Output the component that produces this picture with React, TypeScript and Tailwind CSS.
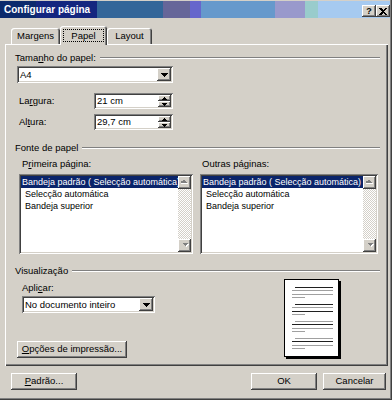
import React from 'react';

const sunken =
  'shadow-[inset_1px_1px_0_#808080,inset_-1px_-1px_0_#ffffff,inset_2px_2px_0_#404040,inset_-2px_-2px_0_#d4d0c8]';
const raised =
  'shadow-[inset_-1px_-1px_0_#404040,inset_1px_1px_0_#ffffff,inset_-2px_-2px_0_#808080,inset_2px_2px_0_#d4d0c8]';
const raisedThin = 'shadow-[inset_-1px_-1px_0_#404040,inset_1px_1px_0_#ffffff,inset_-2px_-2px_0_#808080]';

function GroupTitle({ children, className = '' }: { children: React.ReactNode; className?: string }) {
  return (
    <div className={`flex items-center gap-[4px] h-[12px] leading-[12px] ${className}`}>
      <span className="whitespace-nowrap">{children}</span>
      <div className="flex-1 h-0 border-t border-t-[#808080] border-b border-b-white" />
    </div>
  );
}

function DownArrow({ color = '#000000' }: { color?: string }) {
  return (
    <svg width="7" height="4" viewBox="0 0 7 4" shapeRendering="crispEdges">
      <path d="M0 0h7v1h-1v1h-1v1h-1v1h-1v-1h-1v-1h-1v-1h-1z" fill={color} />
    </svg>
  );
}

function SmallArrow({ up }: { up?: boolean }) {
  return (
    <svg width="5" height="3" viewBox="0 0 5 3" shapeRendering="crispEdges">
      {up ? (
        <path d="M2 0h1v1h1v1h1v1h-5v-1h1v-1h1z" fill="#000" />
      ) : (
        <path d="M0 0h5v1h-1v1h-1v1h-1v-1h-1v-1h-1z" fill="#000" />
      )}
    </svg>
  );
}

function GreyArrow({ up }: { up?: boolean }) {
  const d = up ? 'M3 0h1v1h1v1h1v1h-7v-1h1v-1h1z' : 'M0 0h7v1h-1v1h-1v1h-1v-1h-1v-1h-1v-1z';
  return (
    <svg width="8" height="5" viewBox="0 0 8 5" shapeRendering="crispEdges">
      <path d={d} fill="#ffffff" transform="translate(1 1)" />
      <path d={d} fill="#808080" />
    </svg>
  );
}

function Select({ value, className = '' }: { value: string; className?: string }) {
  return (
    <div className={`${sunken} bg-white h-[17px] p-[2px] flex ${className}`}>
      <span className="flex-1 leading-[13px] pl-[1px] whitespace-nowrap">{value}</span>
      <div className={`${raised} bg-[#d4d0c8] w-[14px] flex items-center justify-center`}>
        <DownArrow />
      </div>
    </div>
  );
}

function SpinBox({ value }: { value: string }) {
  return (
    <div className={`${sunken} bg-white w-[79px] h-[16px] p-[2px] flex`}>
      <span className="flex-1 leading-[12px] pl-[1px]">{value}</span>
      <div className="w-[13px] flex flex-col">
        <div className={`${raisedThin} bg-[#d4d0c8] h-[6px] flex items-center justify-center`}>
          <SmallArrow up />
        </div>
        <div className={`${raisedThin} bg-[#d4d0c8] h-[6px] flex items-center justify-center`}>
          <SmallArrow />
        </div>
      </div>
    </div>
  );
}

function Scrollbar() {
  return (
    <div className="w-[13px] shrink-0 flex flex-col bg-[image:repeating-conic-gradient(#d4d0c8_0_25%,#ffffff_0_50%)] bg-[length:2px_2px]">
      <div className={`${raised} bg-[#d4d0c8] h-[13px] flex items-center justify-center`}>
        <GreyArrow up />
      </div>
      <div className="flex-1" />
      <div className={`${raised} bg-[#d4d0c8] h-[13px] flex items-center justify-center`}>
        <GreyArrow />
      </div>
    </div>
  );
}

const trays = ['Bandeja padrão ( Selecção automática)', 'Selecção automática', 'Bandeja superior'];

function ListBox({ className = '' }: { className?: string }) {
  return (
    <div className={`${sunken} bg-white h-[80px] p-[2px] flex text-[9px] ${className}`}>
      <div className="flex-1 min-w-0 overflow-hidden">
        {trays.map((t, i) => (
          <div
            key={t}
            className={
              i === 0
                ? 'h-[12px] leading-[12px] whitespace-nowrap bg-[#0a246a] text-white pl-[1px]'
                : 'h-[12px] leading-[12px] whitespace-nowrap pl-[4px]'
            }
          >
            {t}
          </div>
        ))}
      </div>
      <Scrollbar />
    </div>
  );
}

function Button({ children, className = '' }: { children: React.ReactNode; className?: string }) {
  return (
    <div className={`${raised} bg-[#d4d0c8] h-[17px] flex items-center justify-center whitespace-nowrap ${className}`}>
      {children}
    </div>
  );
}

function Tab({ label, width, selected }: { label: string; width: string; selected?: boolean }) {
  return (
    <div
      className={`${width} ${
        selected ? 'h-[19px] -mb-px relative z-10 pt-[3px]' : 'h-[16px] pt-[2px]'
      } bg-[#d4d0c8] rounded-t-[3px] shadow-[inset_1px_1px_0_#ffffff,inset_-1px_0_0_#404040,inset_-2px_0_0_#808080] flex justify-center`}
    >
      {selected ? (
        <span className="w-[41px] h-[13px] leading-[11px] text-center border border-dotted border-black">{label}</span>
      ) : (
        <span className="leading-[12px]">{label}</span>
      )}
    </div>
  );
}

function PagePreview() {
  const groups = [
    ['#202020', '#a0a0a0', '#a0a0a0', '#a0a0a0'],
    ['#202020', '#a0a0a0', '#202020', '#a0a0a0'],
    ['#a0a0a0', '#202020', '#a0a0a0', '#a0a0a0'],
    ['#a0a0a0', '#202020', '#a0a0a0', '#a0a0a0'],
  ];
  return (
    <svg width="57" height="80" viewBox="0 0 57 80" shapeRendering="crispEdges">
      <rect x="2" y="2" width="55" height="78" fill="#000" />
      <rect x="0.5" y="0.5" width="54" height="77" fill="#fff" stroke="#000" />
      {groups.map((g, gi) =>
        g.map((c, li) => {
          const y = 8 + gi * 17 + Math.round(li * 3.3);
          const x1 = li === 0 ? 11 : 8;
          const x2 = li === 3 ? 21 : 49;
          return <rect key={`${gi}-${li}`} x={x1} y={y} width={x2 - x1} height="1" fill={c} />;
        })
      )}
    </svg>
  );
}

function TitleBar() {
  return (
    <div className="h-[17px] flex items-center bg-[image:linear-gradient(90deg,#0c2a6c_0px,#0c2a6c_36px,#14267f_36px,#14267f_97px,#336699_97px,#336699_163px,#666699_163px,#666699_190px,#6666cc_190px,#6666cc_201px,#6699cc_201px,#6699cc_275px,#9999cc_275px,#9999cc_305px,#99cccc_305px,#99cccc_318px,#a6caf0_318px)] pl-[4px]">
      <span className="flex-1 text-white font-bold text-[10px]">Configurar página</span>
      <div className={`${raised} bg-[#d4d0c8] w-[14px] h-[12px] mt-[3px] flex items-center justify-center font-bold text-[9px] leading-none`}>
        ?
      </div>
      <div className={`${raised} bg-[#d4d0c8] w-[14px] h-[12px] mt-[3px] flex items-center justify-center`}>
        <svg width="8" height="7" viewBox="0 0 8 7" shapeRendering="crispEdges">
          <path d="M0 0h2l2 2 2-2h2l-3 3.5 3 3.5h-2l-2-2-2 2h-2l3-3.5z" fill="#000" />
        </svg>
      </div>
    </div>
  );
}

export default function App() {
  return (
    <div className="w-[392px] h-[400px] bg-[#d4d0c8] font-['Liberation_Sans',Arial,sans-serif] text-[9.5px] text-black flex flex-col pt-[1px] pr-[2px] shadow-[inset_-1px_-1px_0_#404040,inset_-2px_-2px_0_#808080] select-none">
      <TitleBar />

      <div className="flex items-end h-[26px] pl-[11px]">
        <Tab label="Margens" width="w-[49px]" />
        <Tab label="Papel" width="w-[47px]" selected />
        <Tab label="Layout" width="w-[45px]" />
      </div>

      <div className="ml-[5px] mr-[2px] h-[322px] shadow-[inset_1px_1px_0_#ffffff,inset_-1px_-1px_0_#404040,inset_-2px_-2px_0_#808080] pl-[10px] pr-[8px] pt-[8px] flex flex-col">
        <GroupTitle>
          Tama<u>n</u>ho do papel:
        </GroupTitle>
        <Select value="A4" className="ml-[2px] mt-[2px] w-[156px]" />

        <div className="mt-[10px] flex items-center h-[16px]">
          <span className="w-[79px] pl-[4px]">
            La<u>r</u>gura:
          </span>
          <SpinBox value="21 cm" />
        </div>
        <div className="mt-[5px] flex items-center h-[16px]">
          <span className="w-[79px] pl-[4px]">
            Al<u>t</u>ura:
          </span>
          <SpinBox value="29,7 cm" />
        </div>

        <GroupTitle className="mt-[12px]">Fonte de papel</GroupTitle>
        <div className="mt-[4px] ml-[4px] flex gap-[7px]">
          <div className="flex flex-col">
            <span className="pl-[3px] h-[12px] leading-[12px]">
              P<u>r</u>imeira página:
            </span>
            <ListBox className="mt-[4px] w-[174px]" />
          </div>
          <div className="flex flex-col">
            <span className="pl-[2px] h-[12px] leading-[12px]">
              Outras pá<u>g</u>inas:
            </span>
            <ListBox className="mt-[4px] w-[178px]" />
          </div>
        </div>

        <GroupTitle className="mt-[11px]">Visualização</GroupTitle>
        <div className="flex justify-between">
          <div className="flex flex-col">
            <span className="ml-[7px] mt-[5px] h-[12px] leading-[12px]">
              Apli<u>c</u>ar:
            </span>
            <Select value="No documento inteiro" className="ml-[7px] mt-[2px] w-[133px]" />
            <Button className="ml-[2px] mt-[28px] w-[110px]">
              <span>
                <u>O</u>pções de impressão...
              </span>
            </Button>
          </div>
          <div className="mt-[2px] mr-[39px]">
            <PagePreview />
          </div>
        </div>
      </div>

      <div className="mt-[7px] flex items-center pl-[11px] pr-[4px]">
        <Button className="w-[66px]">
          <span>
            <u>P</u>adrão...
          </span>
        </Button>
        <div className="flex-1" />
        <Button className="w-[66px]">OK</Button>
        <Button className="w-[63px] ml-[6px]">Cancelar</Button>
      </div>
    </div>
  );
}
